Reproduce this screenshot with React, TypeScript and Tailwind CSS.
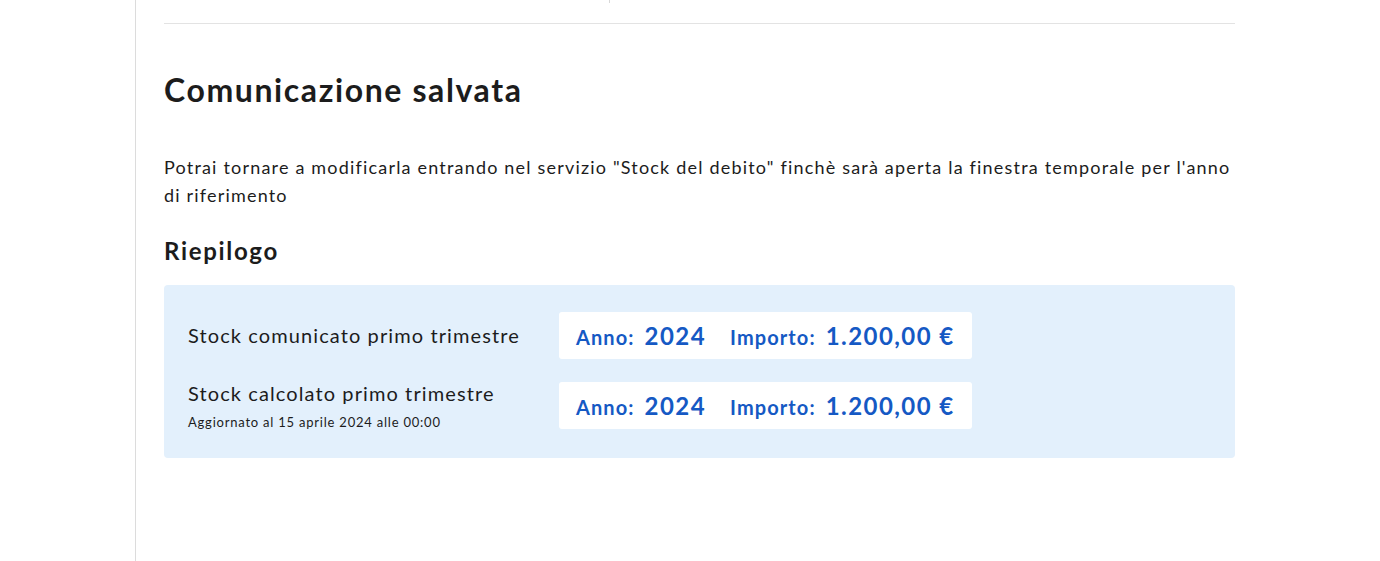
const rows = [
  { label: 'Stock comunicato primo trimestre', note: '', anno: '2024', importo: '1.200,00 €' },
  {
    label: 'Stock calcolato primo trimestre',
    note: 'Aggiornato al 15 aprile 2024 alle 00:00',
    anno: '2024',
    importo: '1.200,00 €',
  },
]

export default function App() {
  return (
    <div className="flex min-h-screen bg-white text-[#1c1c1c] font-['Lato','Open_Sans',sans-serif]">
      <aside className="w-[136px] shrink-0 border-r border-[#dcdcdc]" />

      <div className="w-[1071px] ml-[28px]">
        <div className="relative h-[24px] border-b border-[#e3e3e3]">
          <span className="absolute left-[445px] top-0 h-[3px] w-px bg-[#d8d8d8]" />
        </div>

        <main className="flex flex-col">
          <h1 className="mt-[46px] text-[32px] leading-[40px] font-bold tracking-[0.05em]">
            Comunicazione salvata
          </h1>

          <p className="mt-[43px] text-[18px] leading-[28px] tracking-[0.066em]">
            Potrai tornare a modificarla entrando nel servizio "Stock del debito" finchè sarà aperta la finestra temporale per l'anno di riferimento
          </p>

          <h2 className="mt-[26px] text-[24px] leading-[32px] font-bold tracking-[0.07em]">Riepilogo</h2>

          <section className="mt-[18px] rounded bg-[#e3f0fc] pl-[24px] pt-[27px] pb-[28px] flex flex-col gap-[23px]">
            {rows.map((r) => (
              <div key={r.label} className="flex items-start">
                <div className="w-[371px] shrink-0">
                  <div className={`text-[20px] leading-[26px] tracking-[0.055em] ${r.note ? '-mt-[2px]' : 'mt-[10px]'}`}>
                    {r.label}
                  </div>
                  {r.note && (
                    <div className="mt-[8px] text-[13px] leading-[16px] tracking-[0.06em]">{r.note}</div>
                  )}
                </div>
                <div className="flex items-baseline bg-white rounded-[3px] h-[47px] px-[17px] pt-[6px] text-[#1559c4] font-bold">
                  <span className="text-[20px] tracking-[0.055em]">Anno:</span>
                  <span className="ml-[10px] text-[24px] tracking-[0.06em]">{r.anno}</span>
                  <span className="ml-[24px] text-[20px] tracking-[0.055em]">Importo:</span>
                  <span className="ml-[10px] text-[24px] tracking-[0.06em]">{r.importo}</span>
                </div>
              </div>
            ))}
          </section>
        </main>
      </div>
    </div>
  )
}
